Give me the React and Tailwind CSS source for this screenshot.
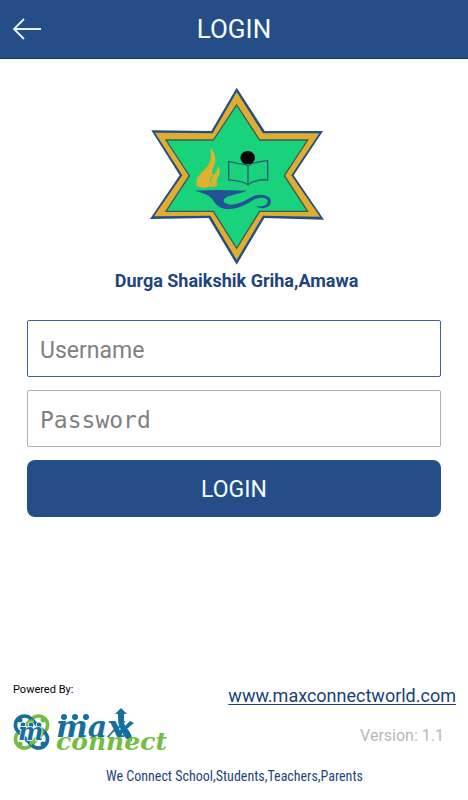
function SchoolCrest() {
  return (
    <svg viewBox="29 20 522 534" className="h-[178px] w-[174px]" role="img" aria-label="School crest">
      <path
        d="M289 22 373 152 548 152 460 285 551 418 372 413 289 553 205 413 29 416 118 285 33 150 213 152Z"
        fill="#254e84"
      />
      <path
        d="M289 35 368 159 537 159 453 285 539 409 368 406 289 539 210 406 41 408 126 285 44 157 217 159Z"
        fill="#dfae31"
      />
      <path
        d="M289 74 358 179 502 179 432 286 502 393 358 393 289 504 219 393 77 393 147 286 77 179 219 179Z"
        fill="#19d27c"
        stroke="#3b5a5c"
        strokeWidth="4"
      />
      <path
        d="M210 204C224 214 230 236 221 256C216 268 213 278 218 284C228 280 231 268 232 257C240 265 240 280 233 290C227 300 229 308 232 315C222 322 211 319 205 319C195 325 181 322 169 318C167 301 170 290 180 281C194 267 205 257 210 240C213 226 211 216 210 204Z"
        fill="#dfb12f"
      />
      <path d="M216 287C211 293 209 300 212 307" fill="none" stroke="#19d27c" strokeWidth="3" />
      <g fill="none" stroke="#2f5c77" strokeWidth="4" strokeLinejoin="round">
        <path d="M323 257C312 248 301 251 290 249C282 248 274 245 265 243V299C283 300 304 300 323 313C342 299 363 297 382 299V241C366 244 342 242 323 257V313" />
      </g>
      <ellipse cx="322" cy="232" rx="22" ry="20" fill="#030706" />
      <path
        d="M163 331C211 328 265 329 320 331C300 341 271 342 255 353C243 362 254 371 269 373C298 373 318 357 341 346C365 338 390 347 392 361C393 377 376 386 362 383C355 382 350 380 348 376C364 382 383 375 382 362C379 350 358 350 343 357C318 371 302 384 272 386C246 388 230 379 220 362C210 344 188 338 163 331Z"
        fill="#245297"
      />
    </svg>
  );
}

function MaxConnectLogo() {
  return (
    <svg viewBox="0 0 160 50" className="h-[50px] w-[160px]" role="img" aria-label="max connect">
      <g fill="none" strokeWidth="3.6">
        <rect x="-0.500" y="15" width="38" height="18" rx="9" transform="rotate(-45 18.500 24)" stroke="#74bd43" />
        <rect x="-0.500" y="15" width="38" height="18" rx="9" transform="rotate(45 18.500 24)" stroke="#146f9f" />
        <path d="M8 26C10 22 15 17 20 12" stroke="#74bd43" />
        <path d="M17 36C22 32 27 27 30 22" stroke="#74bd43" />
      </g>
      <g fill="#146f9f">
        <circle cx="7" cy="12" r="2.5" />
        <circle cx="30" cy="36" r="2.5" />
      </g>
      <g fill="#74bd43">
        <circle cx="30" cy="12" r="2.5" />
        <circle cx="7" cy="36" r="2.5" />
      </g>
      <g fill="#146f9f" stroke="#fff" strokeWidth="1.4" paintOrder="stroke">
        <circle cx="10" cy="17" r="2.4" />
        <circle cx="18" cy="17" r="2.4" />
        <circle cx="26" cy="17" r="2.4" />
        <text x="5" y="32" className="font-['DejaVu_Serif',serif] text-[24px] font-bold italic">
          m
        </text>
      </g>
      <g fill="#146f9f">
        <circle cx="51" cy="9" r="3" />
        <circle cx="62" cy="9" r="3" />
        <circle cx="73" cy="9" r="3" />
        <path d="M108 0 114 6H111V14C111 20 120 23 119 33C111 32 110 25 107 20C105 16 105 12 105 6H102Z" />
        <path d="M104 24C109 21 113 17 117 13L121 15C116 19 111 23 107 28Z" />
      </g>
      <text className="font-['DejaVu_Serif',serif] font-bold italic">
        <tspan x="43" y="29" className="text-[30px]" fill="#146f9f">
          max
        </tspan>
        <tspan x="43" y="42" className="text-[25px]" fill="#74bd43">
          connect
        </tspan>
      </text>
    </svg>
  );
}

export default function App() {
  return (
    <div className="flex min-h-screen flex-col bg-white font-[Roboto,sans-serif]">
      <header className="grid h-[59px] grid-cols-[48px_1fr_48px] items-center border-b border-[#123a70] bg-[#254e88]">
        <button type="button" aria-label="Back" className="flex h-12 items-center pl-3">
          <svg viewBox="0 0 30 22" className="h-[22px] w-[30px]" fill="none" stroke="#e6f6ff" strokeWidth="1.8">
            <path d="M12 1 2 11 12 21M2 11H29" />
          </svg>
        </button>
        <h1 className="text-center text-[26px] leading-8 text-[#f4fbff]">LOGIN</h1>
      </header>

      <main className="px-[27px] pt-7">
        <div className="flex flex-col items-center pl-[5px]">
          <SchoolCrest />
          <h2 className="mt-1 text-lg leading-6 font-bold text-[#1e4580]">Durga Shaikshik Griha,Amawa</h2>
        </div>

        <form className="mt-[27px] flex w-full flex-col gap-[13px]" onSubmit={(e) => e.preventDefault()}>
          <input
            type="text"
            aria-label="Username"
            placeholder="Username"
            className="h-[57px] w-full rounded-[2px] border border-[#3c6396] px-3 pt-[3px] text-[23px] text-gray-800 outline-none placeholder:text-[#808080]"
          />
          <input
            type="password"
            aria-label="Password"
            placeholder="Password"
            className="h-[57px] w-full rounded-[2px] border border-[#b0b0b0] px-3 pt-[3px] font-['DejaVu_Sans_Mono',monospace] text-[23px] text-gray-800 outline-none placeholder:text-[#808080]"
          />
          <button type="submit" className="h-[57px] w-full rounded-lg bg-[#254e88] pt-[3px] text-[23px] text-[#f4fbff]">
            LOGIN
          </button>
        </form>
      </main>

      <footer className="mt-auto pr-3 pb-3 pl-[13px]">
        <div className="flex items-start justify-between">
          <div className="flex flex-col gap-[10px]">
            <p className="text-[11px] leading-4 text-black">Powered By:</p>
            <MaxConnectLogo />
          </div>
          <div className="flex flex-col items-end gap-4 pt-[2px]">
            <a href="#site" className="text-lg leading-6 text-[#173f7a] underline underline-offset-2">
              www.maxconnectworld.com
            </a>
            <p className="pr-3 text-base leading-6 text-[#b8b8b8]">Version: 1.1</p>
          </div>
        </div>
        <p className="mt-[6px] text-center font-['Roboto_Condensed',Roboto,sans-serif] text-sm leading-6 text-[#1e4580]">
          We Connect School,Students,Teachers,Parents
        </p>
      </footer>
    </div>
  );
}
